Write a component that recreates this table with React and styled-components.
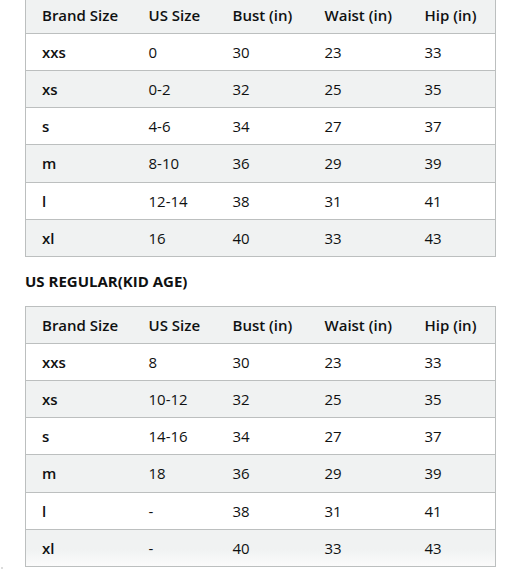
import React from "react";
import styled, { createGlobalStyle } from "styled-components";

const Global = createGlobalStyle`
  html, body { margin: 0; padding: 0; background: #fff; }
  body { font-family: "Open Sans", "Liberation Sans", Arial, sans-serif; color: #0f1111; overflow: hidden; }
`;

const Page = styled.div`
  position: relative;
  width: 519px;
  height: 571px;
  overflow: hidden;
`;

const Content = styled.div`
  margin-top: -4.15px;
  padding-left: 25px;
  display: flex;
  flex-direction: column;
  align-items: flex-start;
`;

const Table = styled.table`
  width: 470px;
  table-layout: fixed;
  border-collapse: collapse;
  border: 1px solid #bcbfbf;
  font-size: 15px;
`;

const Row = styled.tr`
  height: 37.15px;
  background: ${(p) =>
    p.$fade
      ? "linear-gradient(#f0f2f2 0%, #f0f2f2 55%, #fbfbfb 100%)"
      : p.$shade
      ? "#f0f2f2"
      : "#fff"};
  border-bottom: ${(p) => (p.$fade ? "none" : "1px solid #bcbfbf")};
`;

const Cell = styled.td`
  padding: 0 0 0 16px;
  font-weight: ${(p) => (p.$bold ? 600 : 400)};
  vertical-align: middle;
  white-space: nowrap;
  line-height: 20px;
`;

const Head = styled.th`
  padding: 0 0 0 16px;
  font-weight: 600;
  text-align: left;
  vertical-align: middle;
  white-space: nowrap;
  line-height: 20px;
`;

const Title = styled.h3`
  margin: 14px 0 14px;
  font-size: 15px;
  line-height: 21px;
  font-weight: 700;
  color: #0f1111;
`;

const Dot = styled.div`
  position: absolute;
  left: 1px;
  top: 567px;
  width: 2px;
  height: 2px;
  background: #d0d0d0;
  border-radius: 1px;
`;

const widths = [107, 84, 92, 100, 87];
const headers = ["Brand Size", "US Size", "Bust (in)", "Waist (in)", "Hip (in)"];

const adult = [
  ["xxs", "0", "30", "23", "33"],
  ["xs", "0-2", "32", "25", "35"],
  ["s", "4-6", "34", "27", "37"],
  ["m", "8-10", "36", "29", "39"],
  ["l", "12-14", "38", "31", "41"],
  ["xl", "16", "40", "33", "43"],
];

const kid = [
  ["xxs", "8", "30", "23", "33"],
  ["xs", "10-12", "32", "25", "35"],
  ["s", "14-16", "34", "27", "37"],
  ["m", "18", "36", "29", "39"],
  ["l", "-", "38", "31", "41"],
  ["xl", "-", "40", "33", "43"],
];

function SizeTable({ rows, fadeLast }) {
  return (
    <Table>
      <colgroup>
        {widths.map((w, i) => (
          <col key={i} style={{ width: w }} />
        ))}
      </colgroup>
      <thead>
        <Row $shade>
          {headers.map((h) => (
            <Head key={h}>{h}</Head>
          ))}
        </Row>
      </thead>
      <tbody>
        {rows.map((r, i) => (
          <Row
            key={r[0]}
            $shade={i % 2 === 1}
            $fade={fadeLast && i === rows.length - 1}
          >
            {r.map((c, j) => (
              <Cell key={j} $bold={j === 0}>
                {c}
              </Cell>
            ))}
          </Row>
        ))}
      </tbody>
    </Table>
  );
}

export default function App() {
  return (
    <Page>
      <Global />
      <Content>
        <SizeTable rows={adult} />
        <Title>US REGULAR(KID AGE)</Title>
        <SizeTable rows={kid} fadeLast />
      </Content>
      <Dot />
    </Page>
  );
}
